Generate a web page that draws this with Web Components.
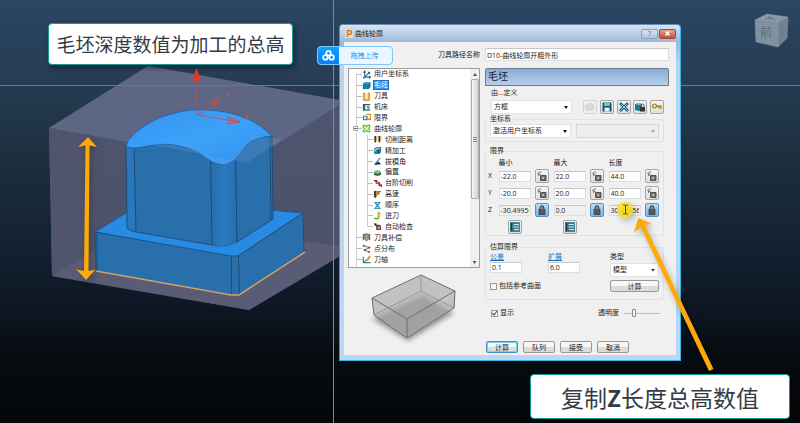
<!DOCTYPE html>
<html lang="zh-CN">
<head>
<meta charset="utf-8">
<title>曲线轮廓</title>
<style>
html,body{margin:0;height:100%;overflow:hidden;background:#030406}
body{font-family:"Open Sans","Noto Sans CJK SC",sans-serif;font-size:7px;line-height:10px;color:#222}
</style>
</head>
<body>
<cad-desktop></cad-desktop>
<script>
const define=(name,html,init)=>{
  const t=document.createElement('template');t.innerHTML=html;
  customElements.define(name,class extends HTMLElement{
    constructor(){super();this.attachShadow({mode:'open'});}
    connectedCallback(){
      if(this.shadowRoot.childNodes.length)return;
      this.shadowRoot.append(t.content.cloneNode(true));
      if(init)init(this,this.shadowRoot);
    }
  });
};

const ICONS={
  axes:'<path d="M3 1v7h7M3 8L8 3" fill="none" stroke="#2c6f9c" stroke-width="1.3"/><path d="M1 3l2-3 1 3zM8 6l2 2-2 2zM6 2l3 0 0 3z" fill="#20577c"/><circle cx="2.5" cy="8.3" r="1.4" fill="#3a93b8"/>',
  block:'<path d="M1 3l2-1.500h6.500v5l-2 2.500H1z" fill="#176a8e"/><path d="M1 3h6.500v6H1z" fill="#1c7ea3"/><path d="M1 3l2-1.500h6.500l-2 1.500z" fill="#42b2cf"/>',
  tool:'<path d="M1.500 1h2v6.500l1 1.500h1l1-1.500V1h2v8.500h-7z" fill="#f1b53a" stroke="#b67a1c" stroke-width=".6"/><path d="M4 1h2v6H4z" fill="#fff4c4"/>',
  machine:'<path d="M1 1h8v1.500H3.500V7H9v2H1z" fill="#38596b"/><path d="M4.500 3.500h4v3h-2z" fill="#5a8fa7"/><path d="M2 8h7" stroke="#adc4cd"/>',
  limits:'<path d="M1 3h5v5H1z" fill="#2d7f9c"/><circle cx="3.500" cy="5.500" r="1.500" fill="#d8f0f8"/><path d="M5 1.500h4.500V7H6V4" fill="none" stroke="#d9931d" stroke-width="1.600"/>',
  clover:'<path d="M1.500 1.500C3 .5 4 2 5 3 6 2 7 .5 8.500 1.500 9.500 3 8 4 7 5c1 1 2.500 2 1.500 3.500C7 9.500 6 8 5 7 4 8 3 9.500 1.500 8.500.5 7 2 6 3 5 2 4 .5 3 1.500 1.500z" fill="#efffe0" stroke="#5cc52b" stroke-width="1.400"/>',
  cuts:'<path d="M1.500 1h2.200v6L2.600 9 1.500 7zM6 1h2.200v6L7.100 9 6 7z" fill="#3b3c40"/><path d="M3.700 1h1v5l-1 2zM8.200 1h1v5l-1 2z" fill="#e7a22c"/>',
  finish:'<path d="M1 8V5a4 4 0 0 1 4-4h4v6L7 9H2z" fill="#2388aa"/><path d="M2 6a4 3 0 0 1 5-3" fill="none" stroke="#b6e8ef" stroke-width="1.200"/><path d="M5 4h2v4H5z" fill="#174d68"/>',
  draft:'<path d="M1 9L9 8 6 5z" fill="#142c38"/><path d="M2 8L8 1" stroke="#367e98" stroke-width="1.200"/>',
  offset:'<ellipse cx="5" cy="6" rx="4" ry="2.500" fill="#285847"/><ellipse cx="5" cy="4.500" rx="3.500" ry="2" fill="#75c665"/>',
  steps:'<path d="M1 2h3v2.500h3V7h2.500v2" fill="none" stroke="#8c2528" stroke-width="1.800"/><circle cx="4" cy="4.500" r="1.200" fill="#d46060"/>',
  fast:'<path d="M1 1h3v6L2.500 9.500 1 7z" fill="#4a4130"/><path d="M4 1h6L7 3l1 1-2 1v1H4z" fill="#d1a333"/><path d="M5 2l3 0M5 4h2" stroke="#3a372f" stroke-width=".8"/>',
  order:'<path d="M1 1h8L6 5l3 4H1l3-4z" fill="#3186a7"/><path d="M3 2h4L5 4zM5 6l2 2H3z" fill="#b7e7ef"/>',
  lead:'<path d="M6.500 1v5c0 3-4 3.500-5 1.500" fill="none" stroke="#5dac35" stroke-width="1.600"/><path d="M5 1h3v5L6.500 8 5 6z" fill="#e8b33a"/>',
  check:'<path d="M1 1l3 1v3L2 4z" fill="#252a30"/><path d="M3.500 3h4L9 4.500v4.500H3.500z" fill="#6d3a32"/><circle cx="6.500" cy="6.500" r="1.600" fill="#e59b75"/>',
  comp:'<path d="M3 1h4v6L5 9 3 7z" fill="#b1a180" stroke="#4e4840" stroke-width=".8"/><path d="M1.500 1v7M8.500 1v7" stroke="#333"/>',
  points:'<path d="M2 2l6 2-5 3 5 2" fill="none" stroke="#355f76"/><g fill="#bc3737"><circle cx="2" cy="2" r="1.200"/><circle cx="8" cy="4" r="1.300"/><circle cx="3" cy="6.500" r="1.300"/><circle cx="8" cy="8.700" r="1.100"/></g>',
  axis:'<path d="M1.500 2v6.500h8M1.500 8.500L4 6" fill="none" stroke="#2c80a7" stroke-width="1.300"/><path d="M4 6l4-5 1.500 1L6 7z" fill="#e7a52c" stroke="#a06c19" stroke-width=".4"/>',
  open:'<path d="M1 8V3h3l1-2 4 2-1 5z" fill="#ddd" stroke="#c3c3c3" stroke-width=".7"/>',
  save:'<path d="M.5.500h9v9h-9z" fill="#184c65"/><path d="M2 1h6v3H2z" fill="#6ec1d7"/><path d="M2.500 5.500h5v4h-5z" fill="#e3f4fa"/>',
  cross:'<path d="M1 1l8 8M9 1L1 9" stroke="#1a5573" stroke-width="2.600"/><path d="M1.500 1.500l7 7M8.500 1.500l-7 7" stroke="#8fdaee" stroke-width="1"/>',
  lockblock:'<path d="M0 2l4-1 3 1v6L4 9 0 8z" fill="#1d7496"/><path d="M0 2l4 1 3-1-3-1z" fill="#7bcbe0"/><path d="M5 5h5v4.500H5z" fill="#353535"/><path d="M6 5V3.500a1.500 1.500 0 0 1 3 0V5" fill="none" stroke="#555"/>',
  key:'<circle cx="2.500" cy="4" r="2" fill="#fff0a0" stroke="#8d7612" stroke-width="1.200"/><path d="M4.500 4H9v3M7 4v2.500" fill="none" stroke="#a88d1c" stroke-width="1.500"/>',
  unlock:'<path d="M3.500 4.500h5.500v5H3.500z" fill="#77736e" stroke="#3a3a3a" stroke-width=".8"/><path d="M5.500 6h1.500v2H5.500z" fill="#c8c4be"/><path d="M4.300 4.500L2.200 3.300C.8 1.800 2.600 0 4.300 1.300M.8 1.500l1 3.500" fill="none" stroke="#6a6d70" stroke-width="1"/>',
  lock:'<path d="M2 4.200h6v5.300H2z" fill="#55585d" stroke="#30363d" stroke-width=".7"/><path d="M3.300 4.300V2.600a1.700 1.700 0 0 1 3.400 0v1.700" fill="#8a8f94" stroke="#464e56" stroke-width="1.200"/>',
  list:'<path d="M0 0h10v10H0z" fill="#477f94"/><path d="M1.500 1v8" stroke="#123849" stroke-width="1.200"/><path d="M3.500 2.500H9M3.500 5H9M3.500 7.500H9" stroke="#b8e9f4" stroke-width="1"/><path d="M2 3l2-2M2 7l2 1" stroke="#1e5970"/>'
};
const svg=n=>`<svg viewBox="0 0 10 10" aria-hidden="true">${ICONS[n]||''}</svg>`;

define('cad-scene',`<style>
:host{display:block;position:absolute;inset:0;background:linear-gradient(#2a4663 0%,#263d55 18%,#1d3040 36%,#142333 56%,#0e1623 73%,#070c12 84%,#040608 100%)}
svg{display:block;width:100%;height:100%}
text{font-family:"Liberation Sans","Noto Sans CJK SC",sans-serif}
</style>
<svg role="img" aria-label="毛坯模型">
<defs>
<linearGradient id="dome" x1="0" y1="0" x2="1" y2="1"><stop offset="0" stop-color="#3193ef"/><stop offset=".5" stop-color="#3da1fa"/><stop offset="1" stop-color="#3290ea"/></linearGradient>
<linearGradient id="corner"><stop offset="0" stop-color="#286dab"/><stop offset=".5" stop-color="#2b7abf"/><stop offset="1" stop-color="#286eae"/></linearGradient>
<linearGradient id="side" x1="0" y1="0" x2="0" y2="1"><stop offset="0" stop-color="#4d5671"/><stop offset="1" stop-color="#4d5068"/></linearGradient>
</defs>
<path d="M49 128L148 66 345 101V253L249 310 52 276z" fill="url(#side)"/>
<path d="M49 128L148 66 345 101 247 163z" fill="#5d6785"/>
<path d="M52 276L144 219 345 247V253L249 310z" fill="#5a5c75"/>
<path d="M49 128L96 137 98 248 52 276z" fill="#50546c"/>
<path d="M95 232L149 199 303 213 238 256 229 257z" fill="#298ae4" stroke="#174f83" stroke-width=".7"/>
<path d="M95 232L231 256H238L303 213 304 252 239 295H231L96 271z" fill="#286fac" stroke="#17466d" stroke-width=".7"/>
<path d="M231.500 256V295M238.500 256L239.500 295M97 233V271" stroke="#174669" stroke-width=".8"/>
<path d="M126 145L127 228Q130 231 136 232L212 245Q225 248 237 242L273 219 272 136 230 125z" fill="#286fab" stroke="#174669" stroke-width=".8"/>
<path d="M211 155L212 245Q225 248 237 242L235 155z" fill="url(#corner)"/>
<path d="M127 146L134 147 136 232 128 228z" fill="#2a78bb"/>
<path d="M134 147L136 232M210.500 155L212 245M235.500 155L237 242M270 137L271 220" fill="none" stroke="#184369" stroke-width=".8"/>
<path d="M126 147Q127 140 132 136C149 119 178 108 207 110 235 111 258 121 272 136Q258 137 250 142C241 148 237 164 223 165 210 164 204 154 190 149 170 142 155 144 143 147Q134 149 126 147z" fill="url(#dome)" stroke="#1d609d" stroke-width=".8"/>
<path d="M148 144L247 163 282 139 258 136Q241 145 236 157L224 165 211 161 194 150Q166 142 148 144z" fill="#7caee7" opacity=".2"/>
<path d="M96 271L231 295H239L305 252" fill="none" stroke="#d5a268" stroke-width="1.500"/>
<g fill="none" stroke="#e6412e" stroke-width=".8">
<path d="M197 115V70M197 115L220 100M197 115L240 122"/>
<path d="M193 79L196.500 69 200 79 196 82zM194 77L199 81M199 76L194 81" fill="#df3424"/>
<path d="M211 101L221 99 215 106zM211 102L218 105M213 105L219 100"/>
<path d="M228 117L240 122 228 124zM229 118L234 124M235 118L229 124"/></g>
<text x="224" y="98" font-size="8" fill="#e6412e">Y</text><text x="243" y="120" font-size="8" fill="#e6412e">X</text>
<rect y="85" width="100%" height="1" fill="#77777b"/><rect x="333" width="1" height="100%" fill="#87888b"/>
<g stroke="#8496a6" stroke-width=".5"><path d="M755 20L767 14 788 17 778 23z" fill="#8c9aa8"/><path d="M755 20L778 23 778 47 756 42z" fill="#8291a0"/><path d="M778 23L788 17 787 38 778 47z" fill="#718393"/></g>
<text x="760" y="37" font-size="12" fill="#5a6f83">前</text>
<path d="M765 19L772 18M768 16L775 20M780 29L784 26M781 34L785 31" stroke="#5c7487"/>
</svg>`);

define('call-out',`<style>
:host{display:flex;align-items:center;justify-content:center;box-sizing:border-box;background:#fff;border:1px solid #159a94;border-radius:4px;color:#343b45;font-family:"Noto Sans CJK SC",sans-serif;box-shadow:2px 3px 5px #0006;white-space:nowrap}
</style><slot></slot>`);

define('upload-badge',`<style>
:host{display:block}
button{display:flex;align-items:stretch;width:100%;height:19px;padding:0;border:1px solid #7cc8fb;border-radius:4px;overflow:hidden;background:#ebf7ff;color:#1593f5;font:inherit;line-height:17px}
i{flex:0 0 21px;background:linear-gradient(#12a0ff,#087ff6);display:grid;place-items:center}
span{flex:1;padding-right:2px;text-align:center}
svg{width:13px;height:11px}
</style><button type="button"><i><svg viewBox="0 0 13 11"><g fill="none" stroke="#fff" stroke-width="1.700"><circle cx="6.500" cy="3.200" r="2.300"/><circle cx="3.400" cy="7.400" r="2.300"/><circle cx="9.600" cy="7.400" r="2.300"/></g></svg></i><span><slot></slot></span></button>`);

define('tree-item',`<style>
:host{display:flex;align-items:center;gap:2px;padding-left:13px;min-height:0;position:relative;white-space:nowrap;line-height:10px}
:host([child]){padding-left:24px}
:host::before{content:"";width:6px;height:1px;margin-right:-4px;margin-left:-6px;background:#bbb}
svg{display:block;width:9px;height:9px;flex:none;margin-left:2px}
span{padding:0 1px}
:host([selected]) span{background:#3393ef;color:#fff;outline:1px solid #226ebc;outline-offset:-1px}
b{display:none;position:absolute;left:4px;width:3px;height:3px;border:1px solid #aaa;background:linear-gradient(#666,#666) center/3px 1px no-repeat #fff}
:host([open]) b{display:block}
</style><b></b><span id="icon" style="display:contents"></span><span><slot></slot></span>`,(h,r)=>{r.getElementById('icon').innerHTML=svg(h.getAttribute('icon'));});

define('icon-button',`<style>
:host{display:block;width:14px;height:14px}
button{display:grid;place-items:center;box-sizing:border-box;width:100%;height:100%;padding:0;border:1px solid #a4a4a4;border-radius:2px;background:linear-gradient(#f6f6f6,#dedede)}
:host([pressed]) button{border-color:#5c91bd;background:linear-gradient(#b9dcf5,#75b3e4)}
:host([off]) button{border-color:#d3d3d3;background:#efefef}
svg{display:block;width:10px;height:10px}
</style><button type="button"></button>`,(h,r)=>{const b=r.querySelector('button');b.innerHTML=svg(h.getAttribute('icon'));b.setAttribute('aria-label',h.getAttribute('label')||'');b.disabled=h.hasAttribute('off');});

define('ui-select',`<style>
:host{display:block;position:relative;height:14px}
select{appearance:none;box-sizing:border-box;display:block;width:100%;height:100%;margin:0;padding:0 2px;border:1px solid #e2e2e2;border-radius:0;background:#fff;color:#222;font:inherit}
:host::after{content:"";position:absolute;right:4px;top:6px;width:4px;height:3px;background:#111;clip-path:polygon(0 0,100% 0,50% 100%);pointer-events:none}
:host([off]) select{background:#eee;border-color:#ccc}:host([off])::after{background:#aaa}
</style><select></select>`,(h,r)=>{const s=r.querySelector('select');s.setAttribute('aria-label',h.getAttribute('label'));s.disabled=h.hasAttribute('off');const v=h.getAttribute('value');if(v)s.add(new Option(v));});

define('ui-field',`<style>
:host{display:block;height:11px;min-width:0}
input{display:block;box-sizing:border-box;width:100%;height:100%;margin:0;padding:0 1px;border:1px solid #dedede;border-top-color:#c4c8cc;background:#fff;color:#222;font:inherit}
:host([off]) input{background:#f0f0f0}
</style><input type="text">`,(h,r)=>{const i=r.querySelector('input');i.value=h.getAttribute('value');i.readOnly=h.hasAttribute('off');i.setAttribute('aria-label',h.getAttribute('label'));});

define('group-box',`<style>
:host{display:block}
fieldset{margin:0;padding:0 4px;border:1px solid #e2e2e2;border-radius:2px;min-width:0;position:relative}
legend{padding:0 1px;margin-left:-1px;height:10px;line-height:10px}
</style><fieldset><legend></legend><slot></slot></fieldset>`,(h,r)=>{r.querySelector('legend').textContent=h.getAttribute('label');});

define('push-button',`<style>
:host{display:block}
button{display:block;box-sizing:border-box;width:100%;height:12px;padding:0;border:1px solid #999;border-radius:2px;background:linear-gradient(#f7f7f7 45%,#dcdcdc 55%);color:#222;font:inherit;line-height:9px}
:host([primary]) button{border-color:#3f8dba;box-shadow:inset 0 0 0 1px #7ed0f1}
</style><button type="button"><slot></slot></button>`);

define('limit-grid',`<style>
:host{display:grid;grid-template-columns:6px 32px 14px 32px 14px 32px 14px;column-gap:4px;row-gap:3px;align-items:center;justify-content:space-between;margin-left:-2px}
.h{grid-column:span 2;height:6px;line-height:6px}.first{grid-column:2/span 2}
.c{justify-self:center}
</style>`,(h,r)=>{
  let s='<span class="h first">最小</span><span class="h">最大</span><span class="h">长度</span>';
  for(const [k,...v] of [['X','-22.0','22.0','44.0'],['Y','-20.0','20.0','40.0'],['Z','-30.49956','0.0','30.49956']]){
    s+=`<span>${k}</span>`;
    for(const x of v)s+=`<ui-field value="${x}" label="${k}" ${k==='Z'?'off':''}></ui-field><icon-button icon="${k==='Z'?'lock':'unlock'}" label="锁定 ${k}" ${k==='Z'?'pressed':''}></icon-button>`;
  }
  s+='<span></span><icon-button class="c" icon="list" label="最小"></icon-button><span></span><icon-button class="c" icon="list" label="最大"></icon-button>';
  r.innerHTML+=s;
});

define('nav-tree',`<style>
:host{display:flex;box-sizing:border-box;height:200px;border:1px solid #999ea5;background:#fff;overflow:hidden}
.list{flex:1;display:grid;grid-auto-rows:1fr;height:196px;position:relative}
.list::before{content:"";position:absolute;left:7px;top:5px;bottom:-2px;width:1px;background:#d0d0d0}
.list::after{content:"";position:absolute;left:18px;top:66px;bottom:38px;width:1px;background:#d0d0d0}
.bar{width:9px;display:flex;flex-direction:column;align-items:center;justify-content:space-between;background:#f0f0f0}
.bar i{width:4px;height:3px;margin:4px 0 3px;background:#555;clip-path:polygon(0 0,100% 0,50% 100%)}
.bar i:first-child{transform:rotate(180deg)}
.thumb{box-sizing:border-box;width:8px;height:120px;margin-bottom:auto;border:1px solid #aaa;border-radius:1px;background:linear-gradient(90deg,#f5f5f5,#d3d3d3);display:grid;place-items:center}
.thumb::after{content:"";width:4px;height:5px;background:repeating-linear-gradient(#888 0 1px,transparent 1px 2px)}
</style><div class="list">
<tree-item icon="axes">用户坐标系</tree-item><tree-item icon="block" selected>毛坯</tree-item><tree-item icon="tool">刀具</tree-item><tree-item icon="machine">机床</tree-item><tree-item icon="limits">限界</tree-item><tree-item icon="clover" open>曲线轮廓</tree-item>
<tree-item child icon="cuts">切削距离</tree-item><tree-item child icon="finish">精加工</tree-item><tree-item child icon="draft">拔模角</tree-item><tree-item child icon="offset">偏置</tree-item><tree-item child icon="steps">台阶切削</tree-item><tree-item child icon="fast">高速</tree-item><tree-item child icon="order">顺序</tree-item><tree-item child icon="lead">进刀</tree-item><tree-item child icon="check">自动检查</tree-item>
<tree-item icon="comp">刀具补偿</tree-item><tree-item icon="points">点分布</tree-item><tree-item icon="axis">刀轴</tree-item></div>
<div class="bar"><i></i><div class="thumb"></div><i></i></div>`);

define('stock-preview',`<style>:host{display:block;padding:5px 0 0 22px}svg{display:block;width:88px;height:66px;overflow:visible}</style>
<svg viewBox="0 0 88 66" role="img" aria-label="方框预览"><defs><filter id="b" x="-20%" y="-20%" width="140%" height="140%"><feGaussianBlur stdDeviation="2.500"/></filter></defs>
<path d="M2 46L53 22 84 40 38 68z" fill="#777" opacity=".75" filter="url(#b)"/>
<path d="M2 25L51 2 85 18V35L37 65 4 42z" fill="#aaa" opacity=".55"/>
<path d="M2 25L37 46 85 18 51 2zM2 25L4 42 37 65V46M37 65L84 35 85 18" fill="#aaa" fill-opacity=".22" stroke="#6e6e6e" stroke-width="1"/>
<path d="M4 42L51 18 84 35M51 2V18" fill="none" stroke="#888" stroke-width=".7"/></svg>`);

define('stock-page',`<style>
:host{display:flex;flex-direction:column}
h2{box-sizing:border-box;height:18px;margin:0;padding:0 2px;border:1px solid #6d7b8d;border-radius:2px 2px 0 0;background:linear-gradient(#88abd7,#b6cfec);font-size:10px;font-weight:400;line-height:15px}
.intro{padding:2px 5px 0 6px}
.row{display:grid;grid-template-columns:81px 1fr;gap:5px;align-items:center}
.def{margin-top:2px}
.tools{display:flex;justify-content:space-between;margin-left:6px}
.coord{margin-bottom:4px}
.lim{margin-bottom:6px}
.limits-body{padding:4px 0 1px}
.est{display:grid;grid-template-columns:58px 62px 1fr;grid-template-rows:10px 15px 18px;align-items:center;height:43px;padding-bottom:4px}
a{color:#1972b9;text-decoration:underline}
.est ui-field{width:32px;margin-bottom:4px}.check{grid-column:span 2}
label{display:flex;align-items:center;gap:2px}
input[type=checkbox]{appearance:none;box-sizing:border-box;width:7px;height:7px;margin:0;border:1px solid #999;background:#f7f7f7;display:grid;place-items:center}
input:checked::after{content:"";width:2px;height:4px;margin-top:-1px;border:solid #2c52a0;border-width:0 1px 1px 0;transform:rotate(40deg)}
.show{display:flex;justify-content:space-between;padding:8px 9px 0 6px}
input[type=range]{appearance:none;width:36px;height:8px;margin:0 0 0 3px;background:linear-gradient(#bbb,#bbb) center/100% 1px no-repeat}
input[type=range]::-webkit-slider-thumb{appearance:none;box-sizing:border-box;width:4px;height:8px;border:1px solid #888;border-radius:1px;background:#f5f5f5}
group-box{padding-right:5px}
.row ui-select{height:14px}
</style>
<h2>毛坯</h2>
<div class="intro">由...定义<div class="row def"><ui-select value="方框" label="由...定义"></ui-select><div class="tools"><icon-button icon="open" label="打开" off></icon-button><icon-button icon="save" label="保存"></icon-button><icon-button icon="cross" label="删除"></icon-button><icon-button icon="lockblock" label="锁定毛坯"></icon-button><icon-button icon="key" label="解锁"></icon-button></div></div></div>
<group-box class="coord" label="坐标系"><div class="row" style="padding-bottom:3px"><ui-select value="激活用户坐标系" label="坐标系"></ui-select><ui-select off label="用户坐标系"></ui-select></div></group-box>
<group-box class="lim" label="限界"><div class="limits-body"><limit-grid></limit-grid></div></group-box>
<group-box label="估算限界"><div class="est"><a href="#">公差</a><a href="#">扩展</a><span>类型</span><ui-field value="0.1" label="公差"></ui-field><ui-field value="6.0" label="扩展"></ui-field><ui-select value="模型" label="类型"></ui-select><label class="check"><input type="checkbox">包括参考曲面</label><push-button>计算</push-button></div></group-box>
<div class="show"><label><input type="checkbox" checked>显示</label><label>透明度<input type="range" value="26"></label></div>`);

define('tool-dialog',`<style>
:host{display:block;box-sizing:border-box;border:1px solid #668cb0;border-right-color:#35b9e9;border-bottom-color:#35b9e9;border-radius:4px 4px 0 0;background:linear-gradient(#d6e5f5 0,#9eb9dc 17px,#bad4f0 40px,#bcd6f3);padding:0 4px 5px}
header{display:flex;align-items:center;gap:2px;height:17px;padding-left:1px}
.logo{width:8px;height:9px}
h1{flex:1;margin:0;font-size:7px;font-weight:400}
header button{box-sizing:border-box;width:17px;height:10px;padding:0;border:1px solid #8ba0b8;border-radius:2px;background:linear-gradient(#d8e5f3,#aec3dc);font:inherit;line-height:7px;color:#526a86}
header button.x{border-color:#a04b36;background:linear-gradient(#e8a18c,#c84e32);color:#fff;margin-left:-1px}
main{background:#f0f0f0;padding:6px 7px 2px 4px}
.name{display:grid;grid-template-columns:132px 1fr;gap:5px;align-items:center}
.name span{text-align:right}
.name ui-field{height:13px}
.cols{display:grid;grid-template-columns:132px 1fr;gap:5px;margin-top:7px}
footer{display:grid;grid-template-columns:repeat(4,32px);gap:5px;margin-left:138px;padding-top:2px}
</style>
<header><svg class="logo" viewBox="0 0 8 9" aria-hidden="true"><path d="M0 0h8v9H0z" fill="#f5dcc6"/><path d="M2.500 8V1.500h2a1.800 1.800 0 0 1 0 3.800h-2" fill="none" stroke="#df761d" stroke-width="1.500"/></svg><h1>曲线轮廓</h1><button type="button" aria-label="帮助">?</button><button type="button" class="x" aria-label="关闭"><svg width="5" height="5" viewBox="0 0 5 5" style="display:block;margin:auto"><path d="M.5.500l4 4M4.500.500l-4 4" stroke="#fff" stroke-width="1.500"/></svg></button></header>
<main><div class="name"><span>刀具路径名称</span><ui-field value="D10-曲线轮廓开粗外形" label="刀具路径名称"></ui-field></div>
<div class="cols"><div><nav-tree></nav-tree><stock-preview></stock-preview></div><stock-page></stock-page></div>
<footer><push-button primary>计算</push-button><push-button>队列</push-button><push-button>接受</push-button><push-button>取消</push-button></footer></main>`);

define('note-arrows',`<style>:host{display:block;position:absolute;inset:0;pointer-events:none;filter:drop-shadow(2px 3px 3px #0004)}svg{display:block;width:100%;height:100%}</style>
<svg aria-hidden="true"><circle cx="625" cy="210" r="8" fill="#fbe01d" opacity=".88"/><path d="M623 205h2l.500.500.500-.500h2M625.500 205.500v8M623 214h2l.500-.500.500.500h2" fill="none" stroke="#554c22"/>
<g fill="#fea80a"><path d="M88 137L97 147 89.500 145.500 88.500 271 95.500 269.500 86 280 76.500 269.500 84 271 85.500 145.500 78 147z"/><path d="M638.500 218L651 223.500 645 225.500 713.500 369 709 371 641 227.500 634 232z"/></g></svg>`);

define('cad-desktop',`<style>
:host{display:block;position:relative;height:100vh;overflow:hidden}
tool-dialog{position:absolute;left:339px;right:119px;top:24px}
call-out{position:absolute}
.top{left:48px;top:23px;width:245px;height:42px;font-size:19px;line-height:28px}
.bottom{right:10px;top:374px;width:260px;height:45px;font-size:23px;line-height:34px}
.bottom b{font-weight:700}
upload-badge{position:absolute;left:317px;top:46px;width:76px}
</style><cad-scene></cad-scene><tool-dialog></tool-dialog><upload-badge>拖拽上传</upload-badge><note-arrows></note-arrows><call-out class="top">毛坯深度数值为加工的总高</call-out><call-out class="bottom"><span>复制<b>Z</b>长度总高数值</span></call-out>`);
</script>
</body>
</html>
